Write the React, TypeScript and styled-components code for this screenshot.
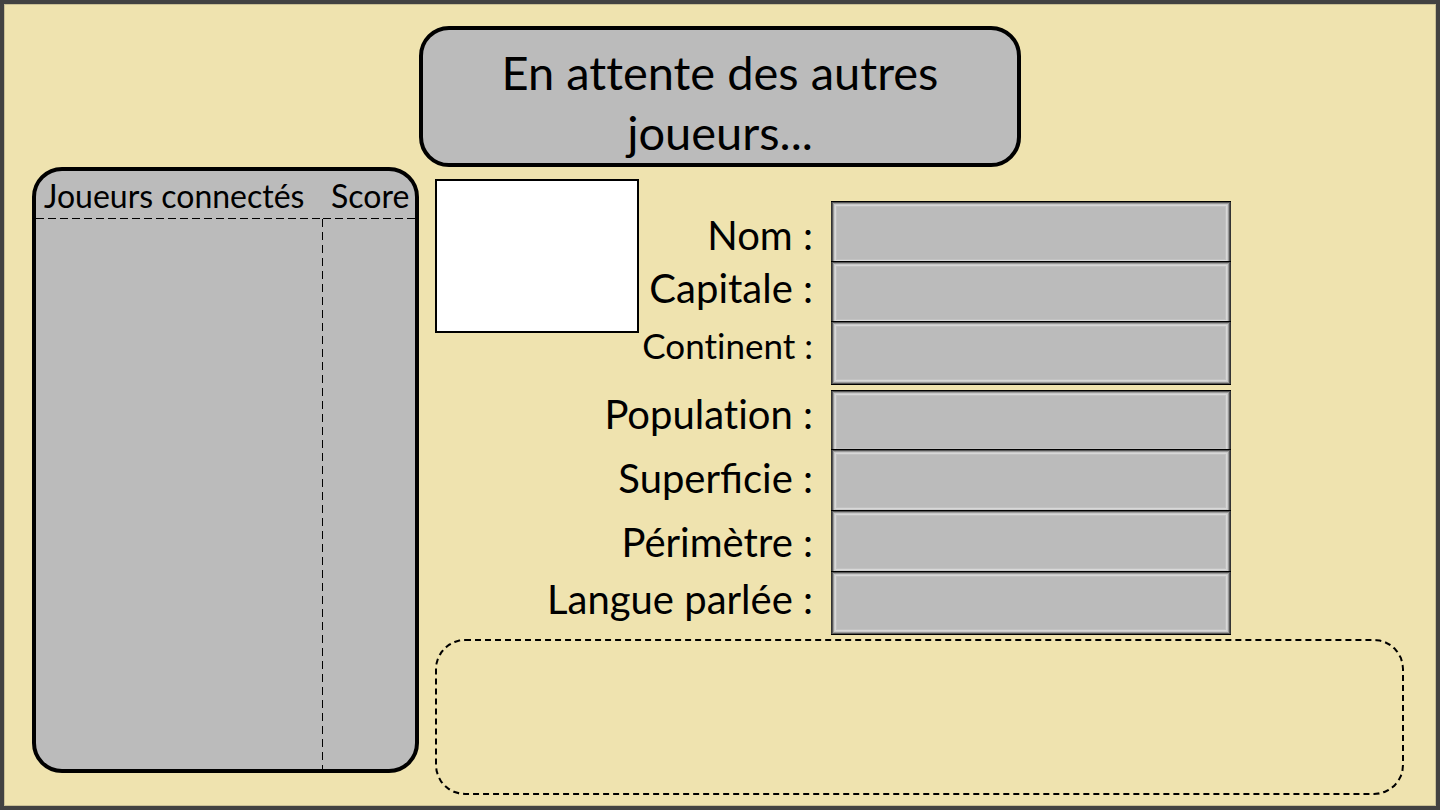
import React from "react";
import styled, { createGlobalStyle } from "styled-components";

const GlobalStyle = createGlobalStyle`
  *, *::before, *::after { box-sizing: border-box; }
  body {
    margin: 0;
    color: #000;
    font-family: Lato, "Open Sans", sans-serif;
    font-variant-ligatures: none;
  }
`;

const Screen = styled.div`
  display: flex;
  flex-direction: column;
  min-height: 100vh;
  padding: 22px 32px 11px 28px;
  border: 4px solid #424242;
  background: #efe3af;
  box-shadow: inset 0 0 0 1px #c9bf95;
`;

const Banner = styled.h1`
  align-self: center;
  width: 602px;
  max-width: 100%;
  min-height: 141px;
  margin: 0 0 0 4px;
  padding: 12px 16px 0;
  border: 4px solid #000;
  border-radius: 30px;
  background: #bbb;
  font-size: 47px;
  line-height: 60px;
  font-weight: 400;
  text-align: center;
`;

const Main = styled.main`
  display: flex;
  flex: 1;
  gap: 16px;
`;

const PlayersPanel = styled.section`
  display: flex;
  flex: 0 0 387px;
  margin-bottom: 22px;
  border: 4px solid #000;
  border-radius: 30px;
  background: #bbb;
  overflow: hidden;
`;

const PlayersTable = styled.table`
  width: 100%;
  border-spacing: 0;
  table-layout: fixed;
`;

const HeadCell = styled.th<{ $width?: string }>`
  width: ${(p) => p.$width ?? "auto"};
  height: 48px;
  padding: 2px 8px 0;
  background: repeating-linear-gradient(90deg, #000 0 8px, transparent 8px 12px) left bottom / 100% 1px no-repeat;
  font-size: 32px;
  line-height: 44px;
  font-weight: 400;
  text-align: left;
  white-space: nowrap;
`;

const BodyCell = styled.td<{ $divided?: boolean }>`
  padding: 0;
  background: ${(p) =>
    p.$divided
      ? "repeating-linear-gradient(180deg, #000 0 8px, transparent 8px 13px) right top / 1px 100% no-repeat"
      : "none"};
`;

const Content = styled.div`
  display: flex;
  flex: 1;
  flex-direction: column;
  gap: 4px;
  min-width: 0;
  padding-top: 12px;
`;

const CountrySheet = styled.form`
  display: grid;
  grid-template-columns: 204px 174px 18px minmax(0, 400px);
  align-items: start;
`;

const Flag = styled.div`
  grid-area: 1 / 1;
  height: 154px;
  border: 2px solid #000;
  background: #fff;
`;

const Labels = styled.div`
  display: grid;
  grid-area: 1 / 1 / 2 / 3;
  grid-template-rows: 53px 57px 69px 64px 64px 57px 48px;
  justify-items: end;
  padding-top: 32px;
`;

const Label = styled.label<{ $small?: boolean; $ligatures?: boolean }>`
  font-size: ${(p) => (p.$small ? 35 : 40)}px;
  line-height: 48px;
  font-variant-ligatures: ${(p) => (p.$ligatures ? "normal" : "none")};
  white-space: nowrap;
`;

const Fields = styled.div`
  display: grid;
  grid-area: 1 / 4;
  gap: 5px;
  padding-top: 22px;
`;

const FieldGroup = styled.div<{ $rows: string }>`
  display: grid;
  grid-template-rows: ${(p) => p.$rows};
`;

const Field = styled.input`
  width: 100%;
  height: 64px;
  padding: 0 12px;
  border: 0;
  border-radius: 0;
  outline: 0;
  background: #bbb;
  box-shadow:
    inset 0 1px #000,
    inset 0 -1px #000,
    inset 0 0 0 1px #333,
    inset 0 0 0 2px #555,
    inset 0 0 0 3px #999,
    inset 0 0 0 4px #c8c8c8,
    inset 0 0 0 5px #d8d8d8,
    inset 0 0 0 6px #c2c2c2;
  font: inherit;
  font-size: 35px;
`;

const AnswerZone = styled.section`
  flex: 1;
  border: 2px dashed #000;
  border-radius: 30px;
`;

const labels = [
  { id: "nom", text: "Nom :" },
  { id: "capitale", text: "Capitale :" },
  { id: "continent", text: "Continent :", small: true },
  { id: "population", text: "Population :" },
  { id: "superficie", text: "Superficie :", ligatures: true },
  { id: "perimetre", text: "Périmètre :" },
  { id: "langue", text: "Langue parlée :" },
];

const groups = [
  { rows: "60px 60px 64px", items: labels.slice(0, 3) },
  { rows: "59px 61px 61px 64px", items: labels.slice(3) },
];

export default function App() {
  return (
    <>
      <GlobalStyle />
      <Screen>
        <Banner>En attente des autres joueurs...</Banner>
        <Main>
          <PlayersPanel>
            <PlayersTable>
              <thead>
                <tr>
                  <HeadCell>Joueurs connectés</HeadCell>
                  <HeadCell $width="92px">Score</HeadCell>
                </tr>
              </thead>
              <tbody>
                <tr>
                  <BodyCell $divided />
                  <BodyCell />
                </tr>
              </tbody>
            </PlayersTable>
          </PlayersPanel>
          <Content>
            <CountrySheet>
              <Flag />
              <Labels>
                {labels.map((l) => (
                  <Label key={l.id} htmlFor={l.id} $small={l.small} $ligatures={l.ligatures}>
                    {l.text}
                  </Label>
                ))}
              </Labels>
              <Fields>
                {groups.map((g) => (
                  <FieldGroup key={g.rows} $rows={g.rows}>
                    {g.items.map((f) => (
                      <Field key={f.id} id={f.id} type="text" readOnly />
                    ))}
                  </FieldGroup>
                ))}
              </Fields>
            </CountrySheet>
            <AnswerZone />
          </Content>
        </Main>
      </Screen>
    </>
  );
}
